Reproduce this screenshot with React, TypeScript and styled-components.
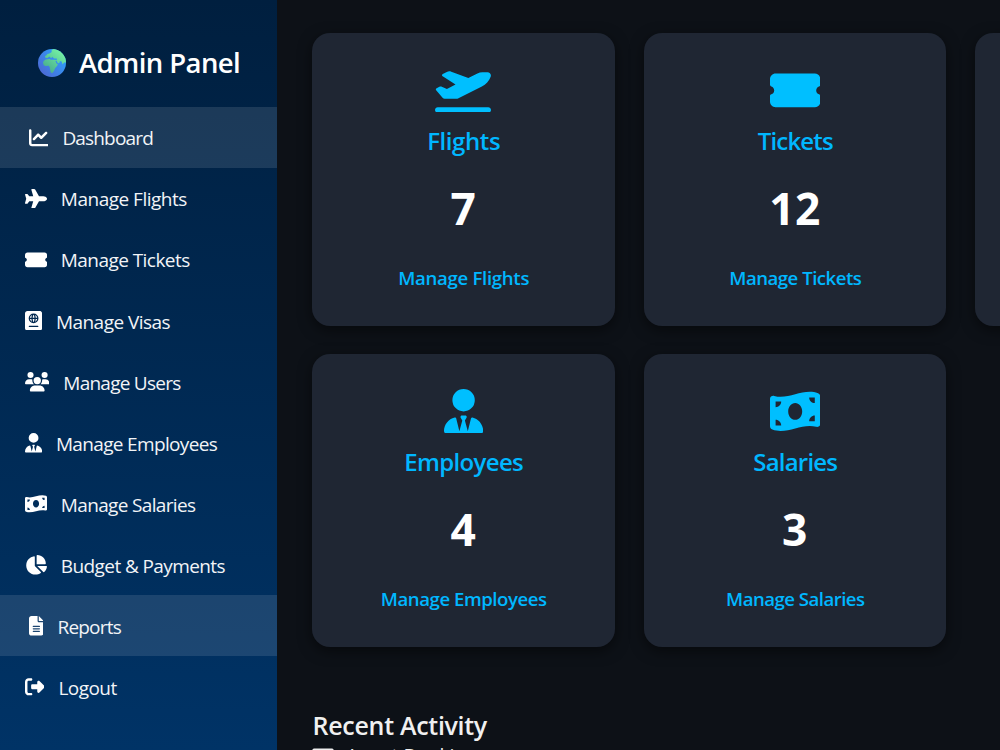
import React from "react";
import styled, { createGlobalStyle } from "styled-components";
import type { IconType } from "react-icons";
import {
  FaChartLine, FaPlane, FaTicketSimple, FaPassport, FaUsers, FaUserTie, FaMoneyBillWave,
  FaChartPie, FaFileLines, FaRightFromBracket, FaPlaneDeparture,
} from "react-icons/fa6";

const GlobalStyle = createGlobalStyle`
  * { box-sizing: border-box; }
  body {
    margin: 0;
    background: #0d1117;
    font-family: "Segoe UI", "Open Sans", sans-serif;
    overflow: hidden;
  }
`;

const Page = styled.div`
  display: flex;
  height: 750px;
  overflow: hidden;
`;

const Sidebar = styled.nav`
  flex: none;
  width: 277px;
  height: 750px;
  padding-top: 33px;
  background: linear-gradient(to bottom, #001f3f, #003366);
`;

const Brand = styled.h2`
  display: flex;
  align-items: center;
  height: 60px;
  margin: 0 0 14px;
  padding-left: 38px;
  color: #fff;
  font-size: 27.5px;
  font-weight: 600;
  letter-spacing: -0.6px;
  white-space: nowrap;
  svg { flex: none; margin-right: 13px; }
`;

const BrandText = styled.span`
  padding-bottom: 2px;
`;

const NavItem = styled.a<{ $active?: boolean }>`
  display: flex;
  align-items: center;
  height: 61.05px;
  padding-left: ${(p) => (p.$active ? 28.5 : 24.5)}px;
  background: ${(p) => (p.$active ? "rgba(255,255,255,0.11)" : "transparent")};
  color: #fff;
  white-space: nowrap;
`;

/* Glyph boxes share one height; their width follows the glyph's own view box. */
const Glyph = styled.span<{ $size: number; $units: number }>`
  display: flex;
  flex: none;
  svg {
    height: ${(p) => p.$size}px;
    width: ${(p) => (p.$size * p.$units) / 512}px;
  }
`;

const NavText = styled.span<{ $track: number }>`
  margin-left: 14.3px;
  padding-top: 1.7px;
  color: #f2f4f7;
  font-size: 19px;
  line-height: 26px;
  letter-spacing: ${(p) => p.$track}px;
`;

const Main = styled.main`
  flex: none;
  width: 1000px;
  padding: 33px 0 0 35px;
`;

const Cards = styled.section`
  display: grid;
  grid-template-columns: repeat(3, 302.6px);
  grid-auto-rows: 292.7px;
  gap: 28.5px 29px;
`;

const Card = styled.article`
  display: flex;
  flex-direction: column;
  align-items: center;
  padding-top: 34.5px;
  border-radius: 18px;
  background: #1f2633;
  color: #00bfff;
  box-shadow: 0 4px 14px rgba(0, 0, 0, 0.5);
`;

const CardTitle = styled.h3<{ $track: number }>`
  margin: 10.3px 0 0;
  padding-left: 0.8px;
  color: #00b7ff;
  font-size: 24px;
  font-weight: 600;
  line-height: 36px;
  letter-spacing: ${(p) => p.$track}px;
`;

const Count = styled.p`
  margin: 19px 0 0;
  color: #fff;
  font-size: 44.3px;
  font-weight: 700;
  line-height: 60px;
  letter-spacing: 0.4px;
`;

const CardLink = styled.a<{ $track: number }>`
  margin-top: 27px;
  padding-left: 0.8px;
  color: #00b7ff;
  font-size: 18.6px;
  font-weight: 600;
  line-height: 26px;
  letter-spacing: ${(p) => p.$track}px;
`;

const ActivityTitle = styled.h2`
  margin: 60.2px 0 0;
  padding-left: 0.6px;
  color: #f0f0f0;
  font-size: 25px;
  font-weight: 600;
  line-height: 36px;
  letter-spacing: -0.3px;
`;

const ActivityItem = styled.div`
  display: flex;
  align-items: center;
  gap: 12px;
  margin-top: 0.2px;
  color: #eee;
  font-size: 19.4px;
  line-height: 26px;
`;

type NavEntry = { icon: IconType; units: number; label: string; active?: boolean; track: number };

const nav: NavEntry[] = [
  { icon: FaChartLine, units: 512, label: "Dashboard", active: true, track: -0.83 },
  { icon: FaPlane, units: 576, label: "Manage Flights", track: -0.5 },
  { icon: FaTicketSimple, units: 576, label: "Manage Tickets", track: -0.56 },
  { icon: FaPassport, units: 448, label: "Manage Visas", track: -0.54 },
  { icon: FaUsers, units: 640, label: "Manage Users", track: -0.75 },
  { icon: FaUserTie, units: 448, label: "Manage Employees", track: -0.66 },
  { icon: FaMoneyBillWave, units: 576, label: "Manage Salaries", track: -0.66 },
  { icon: FaChartPie, units: 576, label: "Budget & Payments", track: -0.6 },
  { icon: FaFileLines, units: 384, label: "Reports", active: true, track: -0.8 },
  { icon: FaRightFromBracket, units: 512, label: "Logout", track: -0.55 },
];

type CardEntry = { icon: IconType; units: number; title: string; count: string; track: number; linkTrack: number };

const cards: CardEntry[] = [
  { icon: FaPlaneDeparture, units: 640, title: "Flights", count: "7", track: -0.4, linkTrack: -0.3 },
  { icon: FaTicketSimple, units: 576, title: "Tickets", count: "12", track: -0.8, linkTrack: -0.5 },
  { icon: FaPassport, units: 448, title: "Visas", count: "5", track: -0.4, linkTrack: -0.5 },
  { icon: FaUserTie, units: 448, title: "Employees", count: "4", track: -0.65, linkTrack: -0.46 },
  { icon: FaMoneyBillWave, units: 576, title: "Salaries", count: "3", track: -0.8, linkTrack: -0.52 },
];

const Globe = () => (
  <svg width="28" height="28" viewBox="0 0 28 28">
    <defs>
      <linearGradient id="sea" x1="0.9" y1="0.3" x2="0.2" y2="0.9">
        <stop offset="0" stopColor="#2f9dfa" />
        <stop offset="1" stopColor="#4b6bd6" />
      </linearGradient>
      <linearGradient id="land" x1="1" y1="0" x2="0.2" y2="1">
        <stop offset="0" stopColor="#7dffa8" />
        <stop offset="1" stopColor="#45a98c" />
      </linearGradient>
      <clipPath id="disc"><circle cx="14" cy="14" r="14" /></clipPath>
    </defs>
    <g clipPath="url(#disc)">
      <rect width="28" height="28" fill="url(#sea)" />
      <path fill="url(#land)" d="M15 0 L13.4 1.8 L13.8 3 L11.4 4.6 Q9 5 8.4 6.2 L7 7.2 L7.3 8.8 L9.4 9 L11.4 7.6 L13.2 9.2 L14.2 7.8 L16 9.4 L18.8 9.6 L18.8 11 L15.4 10.8 L13 10.8 L11.5 10 L7.8 10.5 Q5.4 11.8 5 13.4 Q5 16 7.2 17 L10.8 16.8 Q11.9 18 12 19.8 Q12.2 22 12.8 23.2 Q13.4 24.4 14.6 23.8 Q16 22.4 16.6 20.4 Q17 19 18.2 18 Q19.8 16.4 19.8 15.2 L18.4 14.4 L17.4 12 L18.4 11.6 L20 14.4 L22 13.2 L21.6 12 L23.6 12.6 L24.6 15.4 L26 13.4 L28 13.4 L28 0 Z" />
    </g>
  </svg>
);

function StatCard({ icon: Icon, units, title, count, track, linkTrack }: CardEntry) {
  return (
    <Card>
      <Glyph $size={44.8} $units={units}><Icon /></Glyph>
      <CardTitle $track={track}>{title}</CardTitle>
      <Count>{count}</Count>
      <CardLink $track={linkTrack}>Manage {title}</CardLink>
    </Card>
  );
}

export default function App() {
  return (
    <>
      <GlobalStyle />
      <Page>
        <Sidebar>
          <Brand><Globe /><BrandText>Admin Panel</BrandText></Brand>
          {nav.map(({ icon: Icon, units, label, active, track }) => (
            <NavItem key={label} $active={active}>
              <Glyph $size={19.6} $units={units}><Icon /></Glyph>
              <NavText $track={track}>{label}</NavText>
            </NavItem>
          ))}
        </Sidebar>
        <Main>
          <Cards>
            {cards.map((c) => <StatCard key={c.title} {...c} />)}
          </Cards>
          <ActivityTitle>Recent Activity</ActivityTitle>
          <ActivityItem>
            <Glyph $size={19.6} $units={576}><FaTicketSimple /></Glyph>
            Agent Booking
          </ActivityItem>
        </Main>
      </Page>
    </>
  );
}
